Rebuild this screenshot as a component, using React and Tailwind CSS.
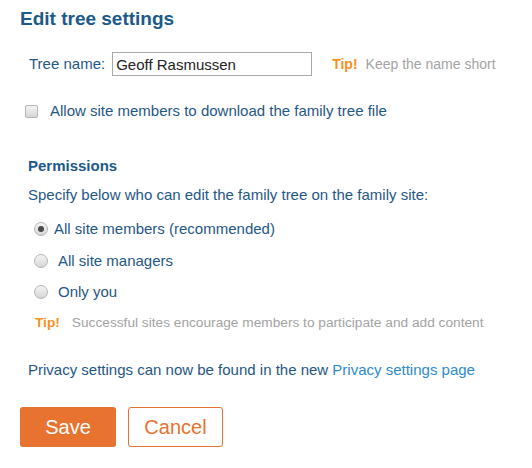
import { useState } from 'react'

const FONT = { fontFamily: '"Liberation Sans", Arial, sans-serif' }

const Radio = ({ checked, onClick, label, gap }) => (
  <label onClick={onClick} className={`flex items-center h-[20px] cursor-pointer ${gap}`}>
    <span className="w-[14px] h-[14px] rounded-full border border-[#b5b5b5] bg-gradient-to-b from-[#f4f4f4] to-[#d6d6d6] flex items-center justify-center shrink-0">
      {checked && <span className="w-[6px] h-[6px] rounded-full bg-[#4a4a4a]" />}
    </span>
    <span>{label}</span>
  </label>
)

export default function App() {
  const [perm, setPerm] = useState('members')
  const [name, setName] = useState('Geoff Rasmussen')
  const [allowDownload, setAllowDownload] = useState(false)

  return (
    <div style={FONT} className="w-[532px] h-[468px] bg-white text-[15px] text-[#1f5785] flex flex-col">
      <h1 className="pl-[20px] pt-[7px] text-[19px] leading-[24px] font-bold text-[#1b5a8a]">Edit tree settings</h1>

      {/* tree name */}
      <div className="flex items-center mt-[21px] pl-[29px] h-[24px]">
        <span className="mr-[7px]">Tree name:</span>
        <input
          value={name}
          onChange={e => setName(e.target.value)}
          className="w-[200px] h-[24px] border border-[#a9a9a9] px-[3px] text-[15px] text-[#222] outline-none"
        />
        <span className="ml-[20px] text-[14px] font-bold text-[#f7901e]">Tip!</span>
        <span className="ml-[8px] text-[14px] text-[#a3a3a3]">Keep the name short</span>
      </div>

      {/* download checkbox */}
      <label onClick={() => setAllowDownload(!allowDownload)} className="flex items-center mt-[25px] pl-[25px] h-[20px] cursor-pointer">
        <span className="w-[13px] h-[13px] rounded-[2px] border border-[#b5b5b5] bg-gradient-to-b from-[#f4f4f4] to-[#d6d6d6] flex items-center justify-center">
          {allowDownload && <span className="text-[10px] leading-none text-[#333]">✓</span>}
        </span>
        <span className="ml-[12px]">Allow site members to download the family tree file</span>
      </label>

      {/* permissions */}
      <h2 className="pl-[28px] mt-[35px] leading-[20px] font-bold text-[#1b5a8a]">Permissions</h2>
      <p className="pl-[28px] mt-[9px] leading-[20px]">Specify below who can edit the family tree on the family site:</p>

      <div className="pl-[34px] flex flex-col">
        <div className="mt-[14px]">
          <Radio checked={perm === 'members'} onClick={() => setPerm('members')} label="All site members (recommended)" gap="gap-[6px]" />
        </div>
        <div className="mt-[12px]">
          <Radio checked={perm === 'managers'} onClick={() => setPerm('managers')} label="All site managers" gap="gap-[10px]" />
        </div>
        <div className="mt-[11px]">
          <Radio checked={perm === 'you'} onClick={() => setPerm('you')} label="Only you" gap="gap-[10px]" />
        </div>
        <div className="mt-[11px] pl-[1px] flex items-center h-[20px] text-[13.7px]">
          <span className="font-bold text-[#f7901e]">Tip!</span>
          <span className="ml-[12px] text-[#a3a3a3]">Successful sites encourage members to participate and add content</span>
        </div>
      </div>

      <p className="pl-[28px] mt-[27px] leading-[20px]">
        Privacy settings can now be found in the new <a href="#" className="text-[#2d8bcf]">Privacy settings page</a>
      </p>

      <div className="flex gap-[12px] pl-[20px] mt-[27px]">
        <button className="w-[96px] h-[40px] rounded-[3px] bg-[#e87230] text-white text-[20px]">Save</button>
        <button className="w-[95px] h-[40px] rounded-[3px] border border-[#e87230] bg-white text-[#e87230] text-[20px]">Cancel</button>
      </div>
    </div>
  )
}
